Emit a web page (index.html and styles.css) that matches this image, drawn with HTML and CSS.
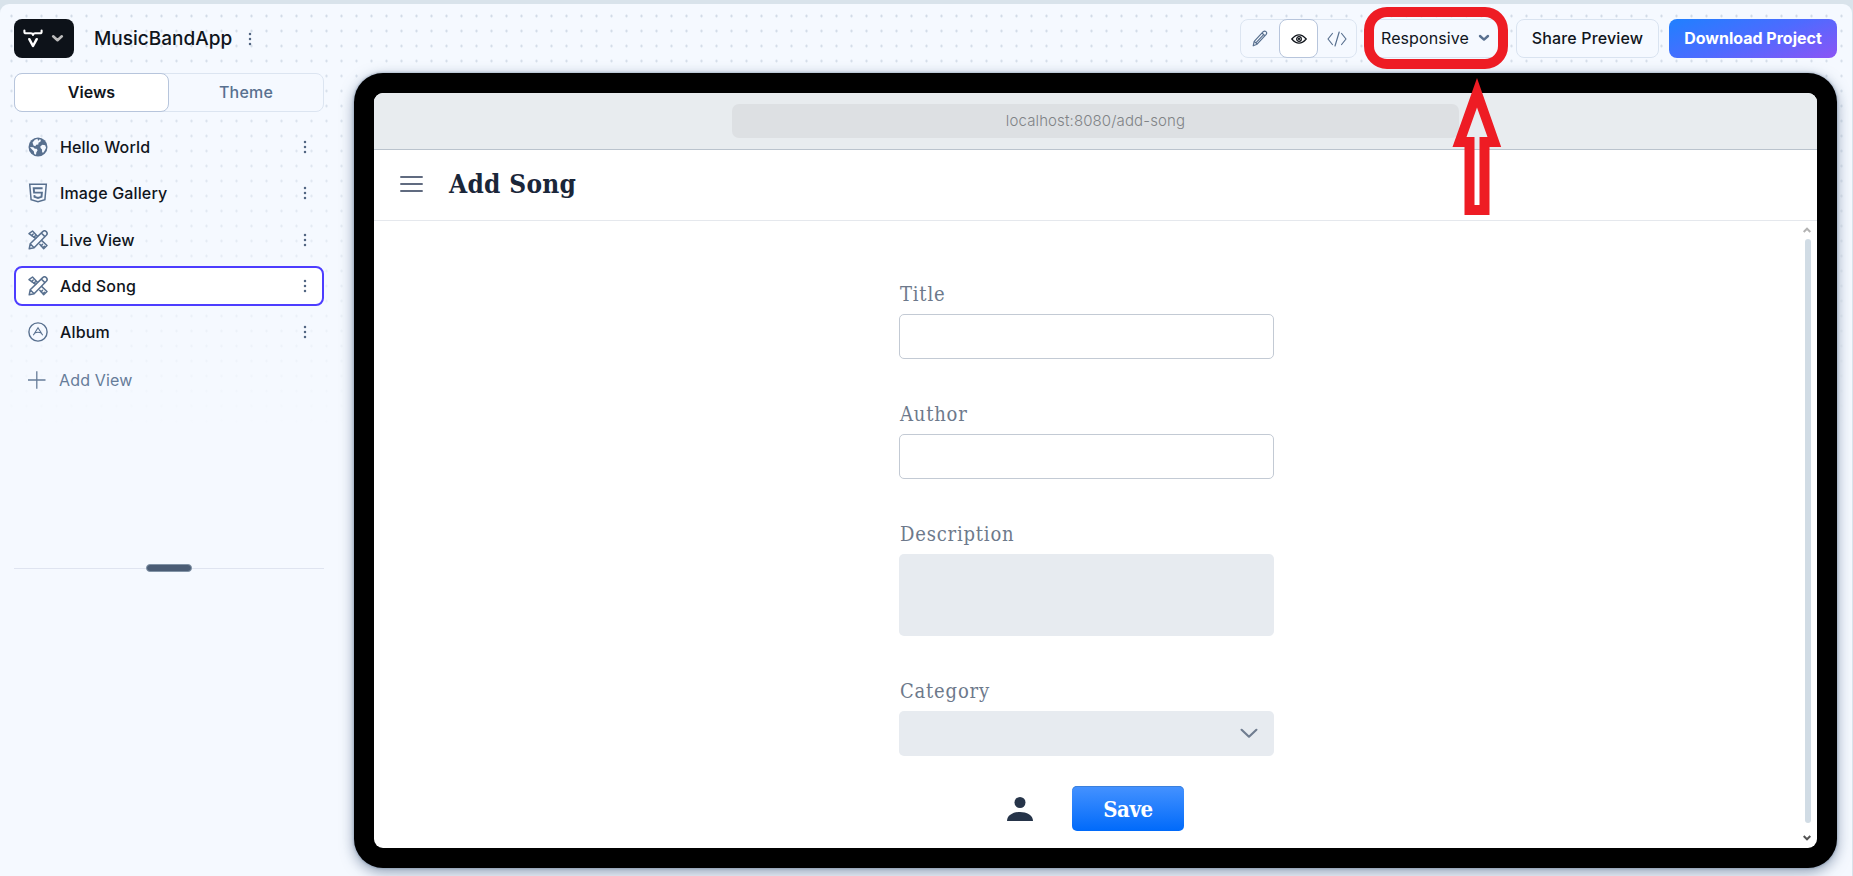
FILE: index.html
```html
<!DOCTYPE html>
<html lang="en">
<head>
<meta charset="utf-8">
<title>MusicBandApp</title>
<link rel="stylesheet" href="styles.css">
</head>
<body>
<svg class="defs" width="0" height="0">
  <defs>
    <symbol id="kebab" viewBox="0 0 4 14"><circle cx="2" cy="2" r="1.25"/><circle cx="2" cy="7" r="1.25"/><circle cx="2" cy="12" r="1.25"/></symbol>
    <symbol id="chev" viewBox="0 0 12 8"><path d="M2 2l4 3.6L10 2" fill="none" stroke="currentColor" stroke-width="2.4" stroke-linecap="round" stroke-linejoin="round"/></symbol>
    <symbol id="design" viewBox="0 0 20 20"><g fill="none" stroke="currentColor" stroke-width="1.5" stroke-linejoin="round" stroke-linecap="round">
      <path d="M7.6 8.4L1 3.6 4.5 1l4.9 5.300M11.8 14.2l3.9 4.6 3.3-3.3-5.2-4.9"/>
      <path d="M3.700 5.500l1.500-1.500M6 7.200l1.300-1.300M13.200 15.700l1.300-1.300M15.300 17.400l1.200-1.200"/>
      <path d="M1.2 18.8l1-5L14.7 1.6a2.5 2.5 0 0 1 3.6 3.6L6.1 17.7zM2.2 13.8l3.9 3.9M13.3 3l3.6 3.6"/></g></symbol>
  </defs>
</svg>
<div class="app">
  <header class="topbar">
    <button class="logo">
      <svg width="20" height="20" viewBox="0 0 20 20" fill="none" stroke="currentColor" stroke-linecap="round" stroke-linejoin="round"><path d="M1.4 1.6v1.1q0 1.6 1.6 1.6h4.8q2.2 0 2.2 1.7 0-1.7 2.2-1.7H17q1.6 0 1.6-1.6V1.6" stroke-width="2.1"/><path d="M6.3 10.2L10 17l3.7-6.8" stroke-width="2.5"/></svg>
      <svg class="logo-chev" width="13" height="9"><use href="#chev"/></svg>
    </button>
    <span class="project">MusicBandApp</span>
    <svg class="kebab" width="4" height="14"><use href="#kebab"/></svg>
    <div class="modes">
      <span class="mode"><svg width="16" height="17" viewBox="0 0 16 17" fill="none" stroke="currentColor" stroke-width="1.2" stroke-linejoin="round"><path d="M1.2 15.8l1-4.4 9-9.7c1.9-1.7 4.5.5 3 2.7l-9.1 9.8zM10 3l3.1 2.9M2.3 11.4l2.8 2.8M4.1 12.6l7.3-7.7"/></svg></span>
      <span class="mode on"><svg width="16" height="12" viewBox="0 0 16 12" fill="none" stroke="currentColor" stroke-width="1.3"><path d="M.8 6Q8-2.2 15.2 6 8 14.2.8 6z"/><circle cx="8" cy="6" r="2.3"/><circle cx="8" cy="6" r=".5"/></svg></span>
      <span class="mode"><svg width="20" height="16" viewBox="0 0 20 16" fill="none" stroke="currentColor" stroke-width="1.2" stroke-linecap="round" stroke-linejoin="round"><path d="M5.4 2.5L1 8l4.4 5.5M14.6 2.5L19 8l-4.4 5.5M12.2 1L8 15"/></svg></span>
    </div>
    <button class="btn responsive">Responsive<svg width="12" height="8"><use href="#chev"/></svg></button>
    <button class="btn share">Share Preview</button>
    <button class="btn download">Download Project</button>
  </header>
  <div class="body">
    <aside class="side">
      <div class="tabs"><span class="tab on">Views</span><span class="tab">Theme</span></div>
      <ul class="views">
        <li class="view"><svg class="ico" viewBox="0 0 20 20"><circle cx="10" cy="10" r="9.5" fill="currentColor"/><path d="M1.900 10l3.400.3 1.500 1.500h1.800l1 1.500-1.300 2.100-.3 2.400-1.700-.9-.5-2.600-2.300-2.200zM4.500 5.500l2.400-2.700 2.600-1 .6 2.100 1.200-1.400 1.700.3-.6 2-1.900.9-.2 1.800-2 .2-1 1.500-1.800-.8zM12.400 9.300l2.100-1.500 2.700.4.9 2.500-1.500 3-1.400 2.100-1.100-.6-.1-2.700-1.500-1.400z" fill="#f5f9ff"/></svg><span>Hello World</span><svg class="kebab" width="4" height="14"><use href="#kebab"/></svg></li>
        <li class="view"><svg class="ico" viewBox="0 0 20 20" fill="none" stroke="currentColor"><path d="M1.7 1.2h16.6l-1.4 15.4L10 18.7l-6.9-2.1z" stroke-width="1.5"/><path d="M14.6 5.2H5.7l.4 4.4h7.8l-.4 4.3-3.5 1.1-3.5-1.1-.1-1.8" stroke-width="1.9"/></svg><span>Image Gallery</span><svg class="kebab" width="4" height="14"><use href="#kebab"/></svg></li>
        <li class="view"><svg class="ico"><use href="#design"/></svg><span>Live View</span><svg class="kebab" width="4" height="14"><use href="#kebab"/></svg></li>
        <li class="view on"><svg class="ico"><use href="#design"/></svg><span>Add Song</span><svg class="kebab" width="4" height="14"><use href="#kebab"/></svg></li>
        <li class="view"><svg class="ico" viewBox="0 0 20 20" fill="none" stroke="currentColor"><circle cx="10" cy="10" r="9.1" stroke-width="1.4"/><path d="M5.3 13.3L10 5.7l4.7 7.6M6.8 11.1q3.2-1.7 6.4 0" stroke-width="1.1"/></svg><span>Album</span><svg class="kebab" width="4" height="14"><use href="#kebab"/></svg></li>
      </ul>
      <div class="add"><svg width="18" height="18" viewBox="0 0 18 18" stroke="currentColor" stroke-width="1.3"><path d="M0 9h17.5M8.8.3v17.4"/></svg><span>Add View</span></div>
      <div class="split"><span class="handle"></span></div>
    </aside>
    <main class="device">
      <div class="screen">
        <div class="urlbar"><div class="url">localhost:8080/add-song</div></div>
        <div class="navbar">
          <svg width="23" height="18" viewBox="0 0 23 18" stroke="#606b80" stroke-width="2.2" stroke-linecap="round"><path d="M1.1 2h20.8M1.1 9h20.8M1.1 16h20.8"/></svg>
          <h1>Add Song</h1>
        </div>
        <div class="content">
          <form class="form">
            <label>Title</label><div class="field"></div>
            <label>Author</label><div class="field"></div>
            <label>Description</label><div class="field filled area"></div>
            <label>Category</label><div class="field filled select"><svg width="18" height="11" viewBox="0 0 18 11" fill="none" stroke="#707d90" stroke-width="2.2" stroke-linecap="round" stroke-linejoin="round"><path d="M1.6 1.8L9 8.7l7.4-6.9"/></svg></div>
            <div class="actions">
              <svg width="26" height="24" viewBox="0 0 26 24" fill="#263449"><circle cx="13" cy="5.5" r="5.5"/><path d="M0 24c0-12 26-12 26 0z"/></svg>
              <button type="button" class="save">Save</button>
            </div>
          </form>
          <div class="scroll">
            <svg width="8" height="6" viewBox="0 0 8 6" fill="none" stroke="#b3b3b3" stroke-width="2"><path d="M.7 5L4 1.7 7.3 5"/></svg>
            <span class="thumb"></span>
            <svg width="8" height="6" viewBox="0 0 8 6" fill="none" stroke="#555" stroke-width="2"><path d="M.7 1L4 4.3 7.3 1"/></svg>
          </div>
        </div>
      </div>
    </main>
  </div>
</div>
<div class="ring"></div>
<svg class="arrow" width="50" height="138" viewBox="0 0 50 138"><path d="M25 0l24.200 69H37.500v68h-25V69H.5zM25 29.500L14.500 59H22.500v68h5V59H35.500z" fill="#ee1c24" fill-rule="evenodd"/></svg>
</body>
</html>
```
FILE: styles.css
```css
* { box-sizing: border-box; }
body { margin: 0; width: 1853px; height: 876px; overflow: hidden; padding: 4px 1px 0 0; background: #d9e3eb; font-family: Inter, sans-serif; color: #10151c; position: relative; }
.defs { position: absolute; }
button { font: inherit; margin: 0; border: 0; padding: 0; }
svg { display: block; flex: none; }
.app { height: 872px; border-radius: 9px 9px 0 0; overflow: hidden; padding: 15px 15px 0 14px;
  background: linear-gradient(to bottom, rgba(245,249,255,0), #f5f9ff 430px), radial-gradient(circle at 7.500px 7.500px, #cbd5e2 0, #cbd5e2 .8px, rgba(203,213,226,0) 1.5px) 4px 4.500px / 15px 15px, #f5f9ff; }
.topbar { display: flex; align-items: center; height: 39px; }
.logo { width: 60px; height: 39px; border-radius: 8px; background: #0d1219; color: #fff; display: flex; align-items: center; padding-left: 9px; }
.logo-chev { margin-left: 8px; color: #bbb; }
.project { font-size: 19px; font-weight: 500; margin-left: 20px; width: 138px; white-space: nowrap; }
.kebab { fill: #536783; }
.project + .kebab { margin-left: 16px; }
.modes { margin-left: auto; display: flex; width: 117px; height: 39px; border: 1px solid #dce5f1; border-radius: 8px; background: #f5f9ff; color: #58708f; }
.mode { flex: 1; display: flex; align-items: center; justify-content: center; }
.mode.on { flex: 0 0 39px; background: #fff; border: 1px solid #b7c5dc; border-radius: 8px; margin: -1px 0; color: #10151c; }
.btn { height: 39px; border: 1px solid #d9e3f0; border-radius: 8px; background: #f5f9ff; font-size: 16px; color: #10151c; display: flex; align-items: center; justify-content: center; white-space: nowrap; padding-bottom: 2px; }
.responsive { width: 131px; margin-left: 13px; gap: 9px; letter-spacing: .1px; }
.responsive svg { color: #58708f; }
.share { width: 143px; margin-left: 15px; font-weight: 500; letter-spacing: .16px; }
.download { width: 168px; margin-left: 10px; border: 0; color: #fff; font-weight: 700; background: linear-gradient(160deg, #1f80ff, #4d6bff 50%, #8c54f5); }
.body { display: flex; padding-top: 15px; }
.side { width: 310px; }
.tabs { display: flex; height: 39px; border: 1px solid #dce5f1; border-radius: 8px; background: #f5f9ff; }
.tab { flex: 1; display: flex; align-items: center; justify-content: center; padding-bottom: 2px; font-size: 16px; font-weight: 500; letter-spacing: .2px; color: #58708f; }
.tab.on { flex: 0 0 155px; background: #fff; border: 1px solid #b7c5dc; border-radius: 8px; margin: -1px 0 -1px -1px; font-weight: 600; letter-spacing: 0; color: #10151c; }
.views { list-style: none; margin: 15px 0 0; padding: 0; display: flex; flex-direction: column; gap: 6.300px; }
.view { height: 40px; display: flex; align-items: center; border: 2px solid transparent; border-radius: 8px; padding: 0 15px 0 11.500px; font-size: 16px; font-weight: 500; letter-spacing: .15px; }
.view.on { background: #fff; border-color: #4d3dff; }
.ico { width: 20px; height: 20px; margin-right: 12.500px; color: #58708f; }
.view .kebab { margin-left: auto; }
.add { display: flex; align-items: center; gap: 13px; height: 40px; margin-top: 8px; padding-left: 14px; font-size: 16px; letter-spacing: .15px; color: #667c99; }
.split { height: 8px; margin-top: 164px; display: flex; justify-content: center; background: linear-gradient(#dfe4f0, #dfe4f0) 0 4px / 100% 1px no-repeat; }
.handle { width: 46px; height: 8px; border-radius: 4px; background: #4b5d75; border: 1px solid #8294a7; }
.device { width: 1483px; height: 795px; margin-left: 30px; padding: 20px; background: #000; border-radius: 29px; box-shadow: 0 4px 14px rgba(60,85,120,.55), 0 0 3px rgba(60,85,120,.5); }
.screen { height: 755px; background: #fff; border-radius: 9px; overflow: hidden; }
.urlbar { height: 57px; background: #e8ecef; border-bottom: 1px solid #bac3cd; display: flex; justify-content: center; padding-top: 11px; }
.url { width: 727px; height: 34px; border-radius: 7px; background: #dde0e3; color: #808386; font-size: 15px; font-weight: 300; letter-spacing: .12px; line-height: 34px; text-align: center; }
.navbar { height: 71px; border-bottom: 1px solid #e5e8ed; display: flex; align-items: center; padding: 0 0 2px 26px; gap: 26px; }
h1 { margin: 0; font-family: "Roboto Slab", "DejaVu Serif Condensed", "DejaVu Serif", serif; font-stretch: condensed; font-size: 26px; font-weight: 700; letter-spacing: .3px; color: #1a2639; }
.content { height: 627px; position: relative; }
.form { width: 375px; margin-left: 525px; }
label { display: flex; align-items: flex-end; height: 93px; padding: 0 0 8px 1px; font-family: "Roboto Slab", "DejaVu Serif Condensed", "DejaVu Serif", serif; font-stretch: condensed; font-size: 20px; line-height: 24px; color: #6d798b; letter-spacing: .8px; }
.field { height: 45px; border: 1px solid #c3cad4; border-radius: 5px; }
.field + label { height: 75px; }
.filled { background: #e7ebf0; border: 0; }
.area { height: 82px; }
.select { display: flex; align-items: center; justify-content: flex-end; padding-right: 16px; }
.actions { display: flex; align-items: center; padding: 30px 0 0 108px; gap: 39px; }
.save { width: 112px; height: 45px; border-radius: 5px; background: linear-gradient(#4592ff, #006afa); color: #fff; font-family: "Roboto Slab", "DejaVu Serif Condensed", "DejaVu Serif", serif; font-stretch: condensed; font-weight: 700; font-size: 22px; letter-spacing: -.4px; box-shadow: inset 0 1px #3b80dc; }
.scroll { position: absolute; right: 6px; top: 6px; bottom: 7px; display: flex; flex-direction: column; align-items: center; }
.thumb { width: 6px; height: 584px; margin: 6px 0 auto 1px; border-radius: 3px; background: #d1dce5; }
.ring { position: absolute; left: 1364px; top: 7px; width: 144px; height: 62px; border: 10px solid #ee1c24; border-radius: 23px; }
.arrow { position: absolute; left: 1452px; top: 78px; }
```
